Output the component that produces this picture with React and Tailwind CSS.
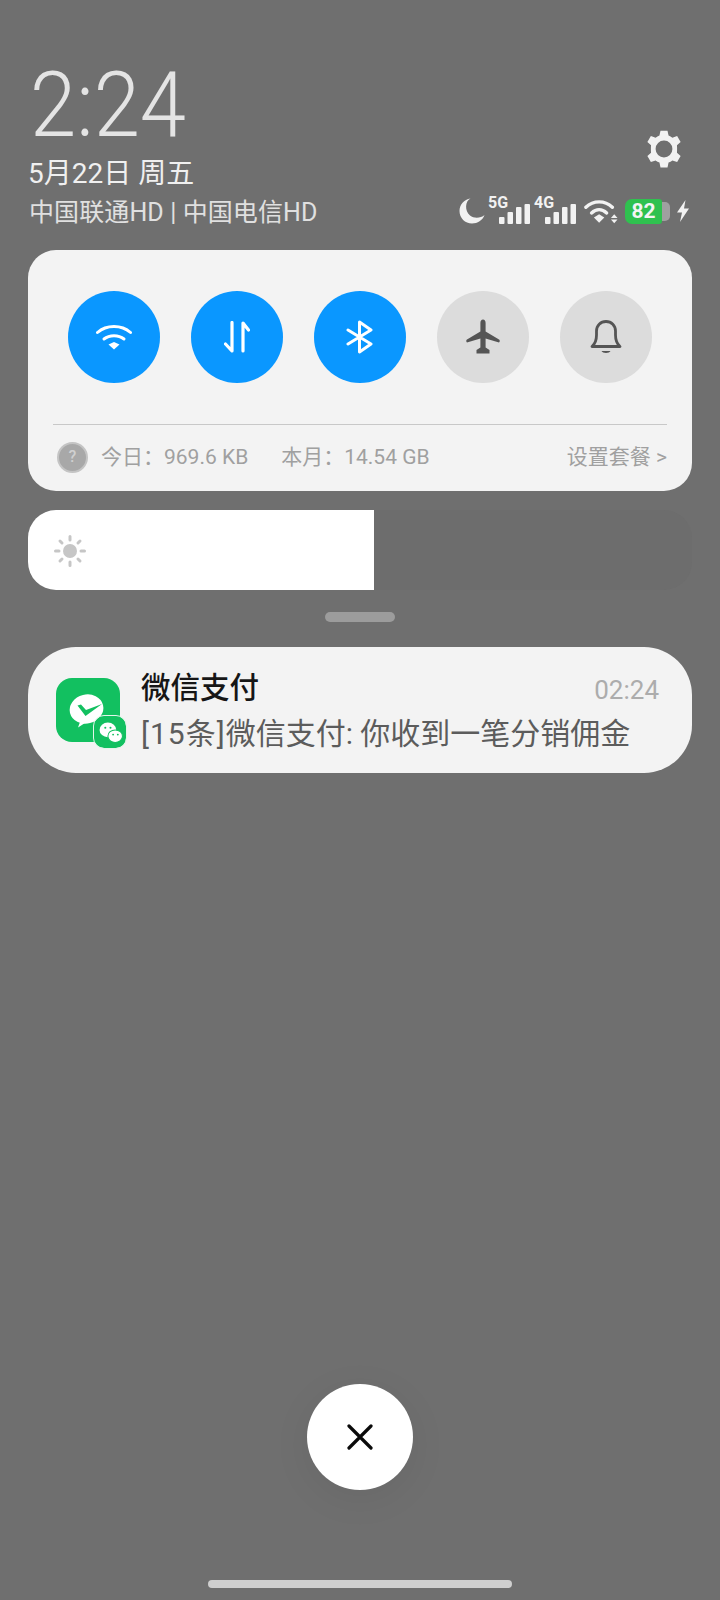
const cjk = { fontFamily: 'Roboto, "Noto Sans CJK SC", sans-serif' };

const WifiIcon = ({ className }) => (
  <svg viewBox="0 0 36 26" className={className} fill="none" stroke="currentColor" strokeWidth="3" strokeLinecap="round">
    <path d="M1.5 8.5C10.5 0.5 25.5 0.5 34.5 8.5" />
    <path d="M8 15C13.5 10.5 22.5 10.5 28 15" />
    <path d="M12.5 20.5L18 18L23.5 20.5L18 25.5Z" fill="currentColor" stroke="none" />
  </svg>
);

const Signal = ({ label }) => (
  <div className="relative flex h-[26px] w-[42px] items-end justify-end">
    <span className="absolute left-0 top-[-3px] text-[16px] leading-[16px] font-bold text-[#f2f2f2]">{label}</span>
    <svg viewBox="0 0 31 20" className="h-[20px] w-[31px]" fill="#f2f2f2">
      <rect x="0" y="13" width="5.5" height="7" rx="1" />
      <rect x="8.5" y="8" width="5.5" height="12" rx="1" />
      <rect x="17" y="3" width="5.5" height="17" rx="1" />
      <rect x="25.5" y="0" width="5.5" height="20" rx="1" />
    </svg>
  </div>
);

const StatusBar = () => (
  <div className="flex items-center">
    <svg viewBox="0 0 26 26" className="h-[26px] w-[26px]" fill="#f2f2f2">
      <path d="M11.5 0.5C6 3 5.5 13 11 17.5C15.5 21 22 20 25.5 17C23.5 22.5 18.5 25.5 13 25.5C6 25.5 0.5 20 0.5 13C0.5 6.5 5 1.5 11.5 0.5Z" />
    </svg>
    <div className="ml-[3px] flex gap-[4px]">
      <Signal label="5G" />
      <Signal label="4G" />
    </div>
    <svg viewBox="0 0 36 26" className="ml-[8px] h-[26px] w-[34px]" fill="none" stroke="#f2f2f2" strokeWidth="3.6" strokeLinecap="round">
      <path d="M2 9C10 1.5 22 1.5 30 9" />
      <path d="M8 15C13 10.5 19 10.5 24 15" />
      <path d="M10.5 20L16 16.5L21.5 20L16 25.5Z" fill="#f2f2f2" stroke="none" />
      <path d="M32 16.5L35.5 20.5H28.5Z" fill="#f2f2f2" stroke="none" />
      <path d="M32 26L35.5 22H28.5Z" fill="#f2f2f2" stroke="none" />
    </svg>
    <div className="ml-[7px] flex h-[25px] w-[45px] items-center">
      <div className="flex h-full w-[37px] items-center justify-center rounded-l-[7px] rounded-r-[3px] bg-[#2fc14f] text-[21px] leading-none font-bold text-[#f4f4f4]">
        82
      </div>
      <div className="h-[19px] w-[8px] rounded-r-[5px] bg-[#a0a0a0]" />
    </div>
    <svg viewBox="0 0 14 22" className="ml-[6px] h-[22px] w-[14px]" fill="#f2f2f2">
      <path d="M9.5 0L1 12.5H6L4 22L13 8.5H8Z" />
    </svg>
  </div>
);

const Toggle = ({ on, children }) => (
  <div className={`flex h-[92px] w-[92px] items-center justify-center rounded-full ${on ? "bg-[#0a97ff] text-white" : "bg-[#dcdcdc] text-[#555555]"}`}>
    {children}
  </div>
);

const Brightness = () => (
  <svg viewBox="0 0 32 32" className="h-[32px] w-[32px]" stroke="#c6c6c6" strokeWidth="3" strokeLinecap="round">
    <circle cx="16" cy="16" r="7" fill="#c6c6c6" stroke="none" />
    <path d="M16 1.5V5M16 27V30.5M1.5 16H5M27 16H30.5M6 6L8 8M24 24L26 26M6 26L8 24M24 8L26 6" />
  </svg>
);

const AppIcon = () => (
  <div className="relative h-[64px] w-[64px] shrink-0 rounded-[16px] bg-[#12c060]">
    <svg viewBox="0 0 64 64" className="h-[64px] w-[64px]">
      <ellipse cx="30.5" cy="31" rx="17" ry="14.5" transform="rotate(-14 30.5 31)" fill="#ffffff" />
      <path d="M20 38L24 44L22 49.5L29 45Z" fill="#ffffff" />
      <path d="M21.5 27.5L25 26.5L30 32L46 26L29.5 38Z" fill="#12c060" />
    </svg>
    <div className="absolute left-[38px] top-[38px] flex h-[32px] w-[32px] items-center justify-center rounded-[10px] bg-[#12c060] outline-1 outline-[#e4f5ea]">
      <svg viewBox="0 0 24 24" className="h-[25px] w-[25px]">
        <ellipse cx="9.5" cy="9.5" rx="8" ry="7" fill="#ffffff" />
        <ellipse cx="16.5" cy="15.5" rx="7" ry="6" fill="#ffffff" stroke="#12c060" strokeWidth="1" />
        <circle cx="7" cy="7.5" r="1" fill="#12c060" />
        <circle cx="12" cy="7.5" r="1" fill="#12c060" />
        <circle cx="14.5" cy="14" r="0.9" fill="#12c060" />
        <circle cx="19" cy="14" r="0.9" fill="#12c060" />
      </svg>
    </div>
  </div>
);

export default function App() {
  return (
    <div style={cjk} className="flex h-[1600px] w-[720px] flex-col overflow-hidden bg-[#6f6f6f] px-[28px]">
      {/* clock + status */}
      <div className="flex h-[250px] justify-between pt-[57px]">
        <div>
          <div className="ml-[2px] h-[97px] origin-left scale-x-[0.925] text-[90px] leading-[97px] font-light text-[#e4e4e4]">2:24</div>
          <div className="mt-[2px] text-[28px] leading-[36px] text-[#f0f0f0]">5月22日 周五</div>
          <div className="ml-[1px] mt-[4px] text-[25px] leading-[34px] tracking-[0.1px] text-[#e0e0e0]">中国联通HD | 中国电信HD</div>
        </div>
        <div className="flex flex-col items-end pr-[2px]">
          <svg viewBox="0 0 24 24" className="mr-[5px] mt-[71px] h-[42px] w-[42px]" fill="#f2f2f2">
            <path fillRule="evenodd" d="M10 1.5H14L14.6 4.3C15.4 4.6 16.1 5 16.8 5.5L19.5 4.6L21.5 8L19.4 9.9C19.5 10.8 19.5 13.2 19.4 14.1L21.5 16L19.5 19.4L16.8 18.5C16.1 19 15.4 19.4 14.6 19.7L14 22.5H10L9.4 19.7C8.6 19.4 7.9 19 7.2 18.5L4.5 19.4L2.5 16L4.6 14.1C4.5 13.2 4.5 10.8 4.6 9.9L2.5 8L4.5 4.6L7.2 5.5C7.9 5 8.6 4.6 9.4 4.3ZM12 7.2A4.8 4.8 0 1 0 12 16.8A4.8 4.8 0 1 0 12 7.2Z" />
          </svg>
          <div className="mt-[28px]"><StatusBar /></div>
        </div>
      </div>

      {/* quick toggles */}
      <div className="h-[241px] rounded-[28px] bg-[#f3f3f3] px-[25px]">
        <div className="flex justify-between px-[15px] pt-[41px]">
          <Toggle on><WifiIcon className="h-[26px] w-[36px]" /></Toggle>
          <Toggle on>
            <svg viewBox="0 0 26 32" className="h-[32px] w-[26px]" fill="none" stroke="currentColor" strokeWidth="3.2" strokeLinecap="round" strokeLinejoin="round">
              <path d="M8 1.5V30L1.5 23" />
              <path d="M19 30V2L24.5 9" />
            </svg>
          </Toggle>
          <Toggle on>
            <svg viewBox="0 0 28 34" className="h-[34px] w-[28px]" fill="none" stroke="currentColor" strokeWidth="3" strokeLinecap="round" strokeLinejoin="round">
              <path d="M2 10L25 24L13.5 32V2L25 10L2 24" />
            </svg>
          </Toggle>
          <Toggle>
            <svg viewBox="0 0 36 36" className="h-[36px] w-[36px]" fill="currentColor">
              <path d="M18 0.5C19.6 0.5 20.6 2 20.6 4V12.5L34 20.5C35 21.1 35 22.8 34 23.4L20.6 19.5V28.5L24.5 31V34.5H11.5V31L15.4 28.5V19.5L2 23.4C1 22.8 1 21.1 2 20.5L15.4 12.5V4C15.4 2 16.4 0.5 18 0.5Z" />
            </svg>
          </Toggle>
          <Toggle>
            <svg viewBox="0 0 32 34" className="h-[34px] w-[32px]" fill="none" stroke="currentColor" strokeWidth="2.8" strokeLinecap="round" strokeLinejoin="round">
              <path d="M2 26.5C5.5 23.5 6.5 20.5 6.5 15V11C6.5 5.5 10.5 1.5 16 1.5C21.5 1.5 25.5 5.5 25.5 11V15C25.5 20.5 26.5 23.5 30 26.5Z" />
              <path d="M11.5 31H20.5C19.5 33.5 12.5 33.5 11.5 31Z" fill="currentColor" stroke="none" />
            </svg>
          </Toggle>
        </div>
        <div className="mt-[41px] h-px bg-[#c8c8c8]" />
        <div className="flex items-center pl-[4px] pt-[16px] text-[21px] leading-[32px] text-[#a0a0a0]">
          <div className="flex h-[31px] w-[31px] items-center justify-center rounded-full border-2 border-[#c4c4c4] bg-[#a8a8a8] text-[16px] font-medium text-[#d0d0d0]">?</div>
          <span className="ml-[13px]">今日：969.6 KB</span>
          <span className="ml-[33px]">本月：14.54 GB</span>
          <span className="ml-auto">设置套餐 &gt;</span>
        </div>
      </div>

      {/* brightness */}
      <div className="mt-[19px] flex h-[80px] overflow-hidden rounded-[28px] bg-[#6d6d6d]">
        <div className="flex w-[346px] items-center bg-white pl-[26px] pt-[2px]">
          <Brightness />
        </div>
      </div>

      <div className="mx-auto mt-[22px] h-[10px] w-[70px] rounded-full bg-[#9c9c9c]" />

      {/* notification */}
      <div className="mt-[25px] flex h-[126px] items-center rounded-[48px] bg-[#f3f3f3] pl-[28px] pr-[33px]">
        <AppIcon />
        <div className="ml-[21px] min-w-0 flex-1">
          <div className="flex items-center justify-between">
            <span className="text-[29.5px] leading-[42px] font-medium text-[#161616]">微信支付</span>
            <span className="mt-[4px] text-[26px] leading-[42px] text-[#acacac]">02:24</span>
          </div>
          <div className="mt-[2px] text-[30px] leading-[42px] whitespace-nowrap text-[#5c5c5c]"><span className="tracking-[1px]">[15条]</span>微信支付: 你收到一笔分销佣金</div>
        </div>
      </div>

      <div className="flex-1" />

      <button className="mx-auto flex h-[106px] w-[106px] items-center justify-center rounded-full bg-white shadow-[0_8px_40px_rgba(0,0,0,0.06)]">
        <svg viewBox="0 0 26 26" className="h-[26px] w-[26px]" fill="none" stroke="#0a0a0a" strokeWidth="3.2" strokeLinecap="round">
          <path d="M2 2L24 24M24 2L2 24" />
        </svg>
      </button>

      <div className="mx-auto mb-[12px] mt-[90px] h-[8px] w-[304px] rounded-full bg-[#cfcfcf]" />
    </div>
  );
}
